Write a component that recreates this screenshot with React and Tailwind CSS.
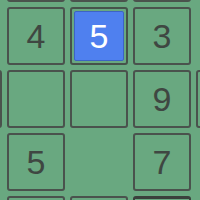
import React from "react";

// board slice: null = no tile, "" = empty tile, "sel:x" = selected tile
const ROWS = [
  [null, "", "", "", null],
  [null, "4", "sel:5", "3", null],
  ["", "", "", "9", ""],
  [null, "5", null, "7", null],
  [null, "", "", "dark:", null],
];

function Tile({ value }) {
  if (value === null) return <div className="w-[58px] h-[58px] shrink-0" />;

  if (value.startsWith("sel:")) {
    return (
      <div className="w-[58px] h-[58px] shrink-0 rounded-[3px] border-2 border-[#46524a] p-[2px] flex">
        <div className="flex-1 rounded-[2px] border border-[#3d63c4] bg-[#4f80ef] flex items-center justify-center text-white text-[34px] leading-none">
          {value.slice(4)}
        </div>
      </div>
    );
  }

  const dark = value.startsWith("dark:");
  return (
    <div
      className={`w-[58px] h-[58px] shrink-0 rounded-[3px] border-2 ${
        dark ? "border-[#3a403c] border-t-[3px]" : "border-[#4a524d]"
      } flex items-center justify-center text-[#3f4742] text-[34px] leading-none`}
    >
      {dark ? "" : value}
    </div>
  );
}

export default function App() {
  return (
    <div
      className="w-[200px] h-[200px] overflow-hidden bg-[#69a880]"
      style={{ fontFamily: '"Liberation Sans", Arial, sans-serif' }}
    >
      <div className="ml-[-56px] mt-[-56px] flex flex-col gap-[5px]">
        {ROWS.map((row, r) => (
          <div key={r} className="flex gap-[5px] shrink-0">
            {row.map((v, c) => (
              <Tile key={c} value={v} />
            ))}
          </div>
        ))}
      </div>
    </div>
  );
}
